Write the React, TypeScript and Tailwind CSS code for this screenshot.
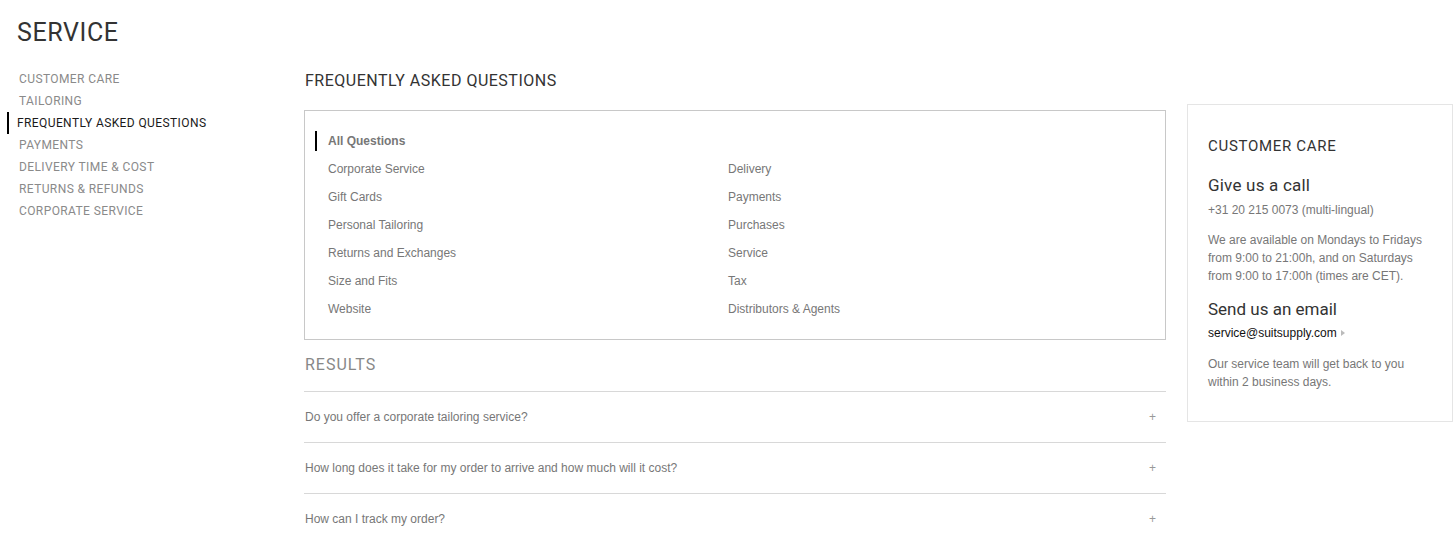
import React from "react";

const din = { fontFamily: "Roboto, 'DejaVu Sans', sans-serif" };

const sideLinks = [
  "CUSTOMER CARE",
  "TAILORING",
  "FREQUENTLY ASKED QUESTIONS",
  "PAYMENTS",
  "DELIVERY TIME & COST",
  "RETURNS & REFUNDS",
  "CORPORATE SERVICE",
];

const leftCats = ["Corporate Service", "Gift Cards", "Personal Tailoring", "Returns and Exchanges", "Size and Fits", "Website"];
const rightCats = ["Delivery", "Payments", "Purchases", "Service", "Tax", "Distributors & Agents"];

const questions = [
  "Do you offer a corporate tailoring service?",
  "How long does it take for my order to arrive and how much will it cost?",
  "How can I track my order?",
];

const App: React.FC = () => {
  return (
    <div className="w-[1455px] h-[544px] overflow-hidden bg-white" style={{ fontFamily: "'Liberation Sans', Arial, sans-serif" }}>
      <h1 className="pl-[17px] pt-[18px] text-[25px] leading-[30px] tracking-[0.6px] text-[#333] font-normal" style={din}>
        SERVICE
      </h1>

      <div className="flex mt-[22px]">
        {/* sidebar */}
        <nav className="w-[304px] shrink-0 -mt-[2px]" style={din}>
          {sideLinks.map((l) => {
            const active = l === "FREQUENTLY ASKED QUESTIONS";
            return (
              <div
                key={l}
                className={`h-[22px] flex items-center text-[12px] tracking-[0.4px] ${
                  active ? "border-l-2 border-black ml-[7px] pl-[8px] text-[#1a1a1a]" : "pl-[19px] text-[#8a8a8a]"
                }`}
              >
                {l}
              </div>
            );
          })}
        </nav>

        {/* main */}
        <main className="w-[862px] shrink-0">
          <h2 className="pl-px text-[16px] leading-[22px] tracking-[0.5px] text-[#333] font-normal" style={din}>
            FREQUENTLY ASKED QUESTIONS
          </h2>

          <div className="mt-[18px] border border-[#c8c8c8] pt-[20px] pb-[16px]">
            <div className="flex items-center h-[20px] ml-[10px] border-l-2 border-black pl-[11px] text-[12px] font-bold text-[#777]">
              All Questions
            </div>
            <div className="flex mt-[4px] pl-[23px]">
              <div className="w-[400px]">
                {leftCats.map((c) => (
                  <div key={c} className="h-[28px] flex items-center text-[12px] text-[#777]">{c}</div>
                ))}
              </div>
              <div>
                {rightCats.map((c) => (
                  <div key={c} className="h-[28px] flex items-center text-[12px] text-[#777]">{c}</div>
                ))}
              </div>
            </div>
          </div>

          <h3 className="mt-[14px] pl-px text-[16px] leading-[22px] tracking-[1px] text-[#888] font-normal" style={din}>
            RESULTS
          </h3>
          <div className="mt-[15px]">
            {questions.map((q) => (
              <div key={q} className="h-[51px] border-t border-[#d8d8d8] flex items-center justify-between pl-px pr-[10px] text-[12px] text-[#777]">
                <span>{q}</span>
                <span className="text-[#999] text-[12px]">+</span>
              </div>
            ))}
          </div>
        </main>

        {/* aside */}
        <aside className="ml-[21px] mt-[34px] w-[266px] h-[318px] shrink-0 border border-[#e5e5e5] px-[20px] pt-[31px]">
          <h3 className="text-[15px] leading-[20px] tracking-[0.7px] text-[#333] font-normal" style={din}>
            CUSTOMER CARE
          </h3>
          <h4 className="mt-[19px] text-[17px] leading-[20px] tracking-[0.2px] text-[#333] font-normal" style={din}>
            Give us a call
          </h4>
          <p className="mt-[6px] text-[12px] leading-[18px] text-[#777]">+31 20 215 0073 (multi-lingual)</p>
          <p className="mt-[12px] text-[12px] leading-[18px] text-[#777]">
            We are available on Mondays to Fridays from 9:00 to 21:00h, and on Saturdays from 9:00 to 17:00h (times are CET).
          </p>
          <h4 className="mt-[14px] text-[17px] leading-[20px] tracking-[0px] text-[#333] font-normal" style={din}>
            Send us an email
          </h4>
          <p className="mt-[5px] text-[12px] leading-[18px] text-[#111] flex items-center">
            service@suitsupply.com
            <span className="ml-[4px] inline-block w-0 h-0 border-y-[3px] border-y-transparent border-l-[4px] border-l-[#bbb]" />
          </p>
          <p className="mt-[13px] text-[12px] leading-[18px] text-[#777]">
            Our service team will get back to you within 2 business days.
          </p>
        </aside>
      </div>
    </div>
  );
};

export default App;
